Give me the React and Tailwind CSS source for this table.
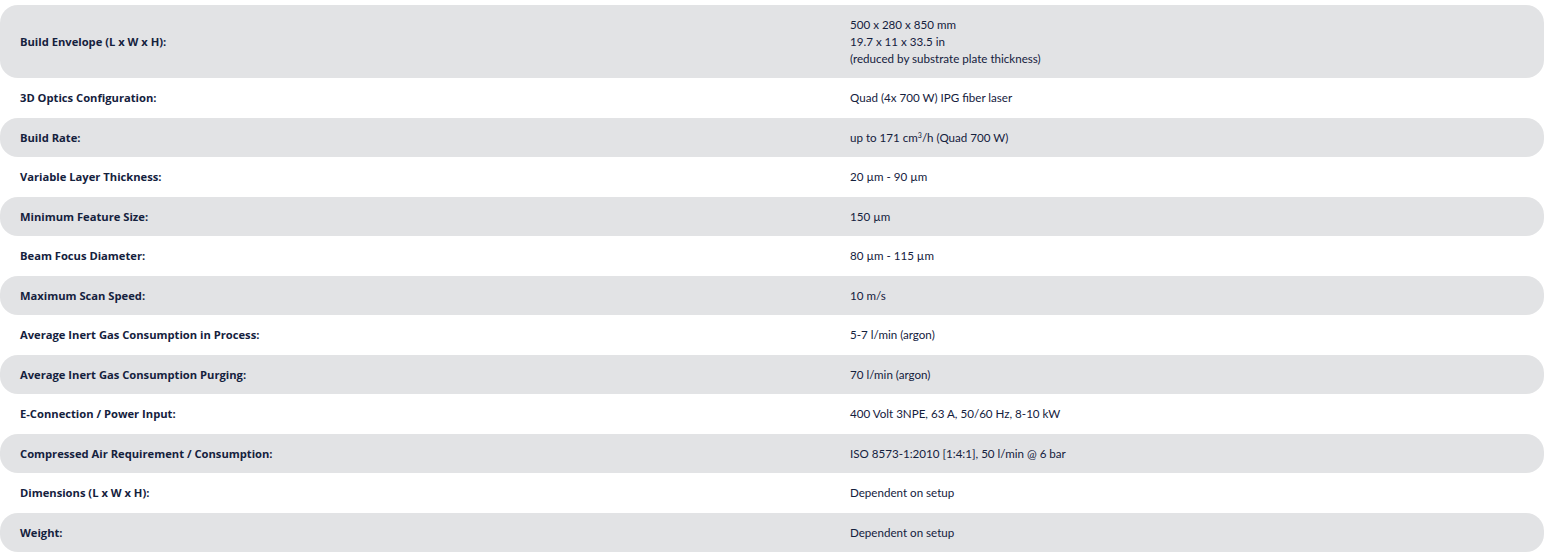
const SPECS = [
  ['Build Envelope (L x W x H):', ['500 x 280 x 850 mm', '19.7 x 11 x 33.5 in', '(reduced by substrate plate thickness)']],
  ['3D Optics Configuration:', ['Quad (4x 700 W) IPG fiber laser']],
  ['Build Rate:', [<>up to 171 cm<sup className="text-[7px]">3</sup>/h (Quad 700 W)</>]],
  ['Variable Layer Thickness:', ['20 µm - 90 µm']],
  ['Minimum Feature Size:', ['150 µm']],
  ['Beam Focus Diameter:', ['80 µm - 115 µm']],
  ['Maximum Scan Speed:', ['10 m/s']],
  ['Average Inert Gas Consumption in Process:', ['5-7 l/min (argon)']],
  ['Average Inert Gas Consumption Purging:', ['70 l/min (argon)']],
  ['E-Connection / Power Input:', ['400 Volt 3NPE, 63 A, 50/60 Hz, 8-10 kW']],
  ['Compressed Air Requirement / Consumption:', ['ISO 8573-1:2010 [1:4:1], 50 l/min @ 6 bar']],
  ['Dimensions (L x W x H):', ['Dependent on setup']],
  ['Weight:', ['Dependent on setup']],
]

export default function App() {
  return (
    <div className="bg-white w-[1550px] h-[557px] pt-[5px] pr-[6px] text-[#14213d] text-[11px] font-['Lato','Open_Sans',sans-serif]">
      {SPECS.map(([label, values], i) => (
        <div
          key={label}
          className={`flex items-center rounded-[18px] ${i === 0 ? 'h-[73px]' : 'h-[39.5px]'} ${i % 2 === 0 ? 'bg-[#e2e3e5]' : 'bg-white'}`}
        >
          <div className="w-[850px] pl-[20px] pt-[2px] font-bold font-['Open_Sans',sans-serif] text-[11.2px]">{label}</div>
          <div className="flex flex-col leading-[17px] text-[11.6px]">
            {values.map((v, j) => <div key={j}>{v}</div>)}
          </div>
        </div>
      ))}
    </div>
  )
}
